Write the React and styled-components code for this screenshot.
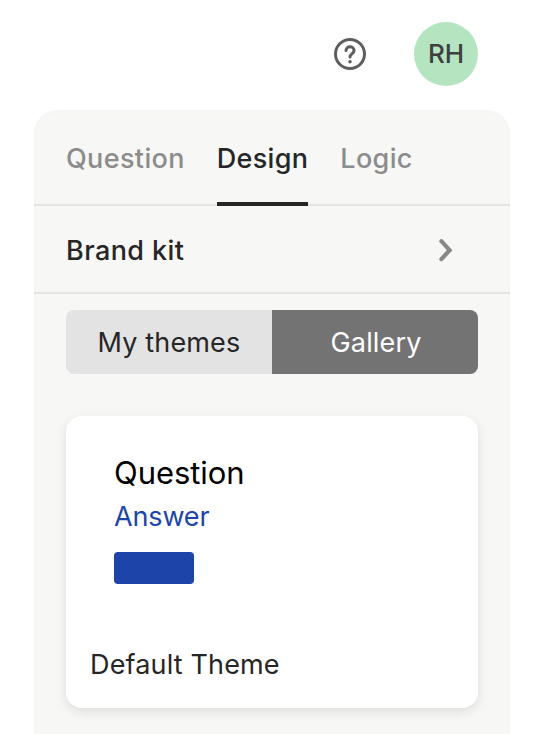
import React from 'react';
import styled, { createGlobalStyle } from 'styled-components';

const GlobalStyle = createGlobalStyle`
  * { box-sizing: border-box; }
  body { margin: 0; background: #fff; overflow: hidden; }
  button { font: inherit; border: 0; padding: 0; background: none; letter-spacing: inherit; }
`;

const Page = styled.div`
  height: 734px;
  display: flex;
  flex-direction: column;
  padding: 0 32px 0 34px;
  overflow: hidden;
  font-family: Inter, sans-serif;
  color: #262627;
`;

const TopBar = styled.header`
  height: 110px;
  flex: none;
  display: flex;
  justify-content: flex-end;
  align-items: center;
  gap: 48px;
  padding: 0 32px 2px 0;
`;

const HelpIcon = styled.svg`
  width: 32px;
  height: 32px;
`;

const Avatar = styled.div`
  width: 64px;
  height: 64px;
  padding-bottom: 1px;
  border-radius: 50%;
  background: #b5e5c0;
  color: #3e3f3f;
  display: grid;
  place-items: center;
  font-size: 26px;
  font-weight: 500;
`;

const Panel = styled.aside`
  flex: 1;
  background: #f7f7f5;
  border: 2px solid #f5f5f4;
  border-width: 2px 2px 0;
  border-radius: 24px 24px 0 0;
`;

const Tabs = styled.nav`
  height: 94px;
  display: flex;
  gap: 32px;
  margin: 0 -2px;
  padding-left: 32px;
  border-bottom: 2px solid #e4e4e3;
`;

const Tab = styled.button`
  height: 94px;
  padding-top: 2px;
  font-size: 27px;
  font-weight: 500;
  letter-spacing: ${(p) => (p.$active ? '0.3px' : '0.36px')};
  color: ${(p) => (p.$active ? '#262627' : '#8c8c8c')};
  border-bottom: 4px solid ${(p) => (p.$active ? '#262627' : 'transparent')};
`;

const BrandRow = styled.div`
  height: 88px;
  display: flex;
  align-items: center;
  justify-content: space-between;
  margin: 0 -2px;
  padding: 2px 56px 0 32px;
  border-bottom: 2px solid #e4e4e3;
  font-size: 27px;
  font-weight: 500;
  letter-spacing: 0.42px;
`;

const Chevron = styled.svg`
  width: 16px;
  height: 24px;
`;

const Segmented = styled.div`
  display: grid;
  grid-template-columns: 1fr 1fr;
  height: 64px;
  margin: 16px 30px 42px;
  border-radius: 8px;
  overflow: hidden;
`;

const Segment = styled.button`
  font-size: 27px;
  letter-spacing: 0.15px;
  padding-left: ${(p) => (p.$active ? 2 : 0)}px;
  background: ${(p) => (p.$active ? '#737373' : '#e3e3e3')};
  color: ${(p) => (p.$active ? '#fff' : '#262627')};
`;

const ThemeCard = styled.article`
  height: 292px;
  margin: 0 30px;
  padding: 36px 24px 0;
  background: #fff;
  border-radius: 16px;
  box-shadow: 0 4px 12px rgba(0, 0, 0, 0.1);
`;

const Preview = styled.div`
  height: 193px;
  padding-left: 24px;
`;

const PreviewQuestion = styled.div`
  font-size: 31px;
  line-height: 42px;
  letter-spacing: -0.05px;
  color: #000;
`;

const PreviewAnswer = styled.div`
  font-size: 27px;
  line-height: 45px;
  letter-spacing: -0.15px;
  color: #1d44a9;
`;

const PreviewButton = styled.div`
  width: 80px;
  height: 32px;
  margin-top: 13px;
  border-radius: 4px;
  background: #1d44a9;
`;

const ThemeName = styled.div`
  font-size: 27px;
  line-height: 40px;
  letter-spacing: 0.15px;
`;

export default function App() {
  return (
    <Page>
      <GlobalStyle />
      <TopBar>
        <HelpIcon viewBox="0 0 32 32" fill="none" stroke="#5e5e5e" strokeWidth="3">
          <circle cx="16" cy="16" r="14.5" />
          <path d="M12 12.4c0-2.2 1.8-3.6 4-3.6s4.1 1.5 4.1 3.7c0 3-4.1 3.2-4.1 6.5" strokeWidth="3" strokeLinecap="round" />
          <circle cx="16" cy="23.8" r="1.8" fill="#5e5e5e" stroke="none" />
        </HelpIcon>
        <Avatar>RH</Avatar>
      </TopBar>
      <Panel>
        <Tabs>
          <Tab>Question</Tab>
          <Tab $active>Design</Tab>
          <Tab>Logic</Tab>
        </Tabs>
        <BrandRow>
          Brand kit
          <Chevron viewBox="0 0 16 24" fill="none" stroke="#888888" strokeWidth="4.2">
            <path d="M3.4 3.2L11.6 12.2 3.4 21.2" strokeLinecap="round" />
          </Chevron>
        </BrandRow>
        <Segmented>
          <Segment>My themes</Segment>
          <Segment $active>Gallery</Segment>
        </Segmented>
        <ThemeCard>
          <Preview>
            <PreviewQuestion>Question</PreviewQuestion>
            <PreviewAnswer>Answer</PreviewAnswer>
            <PreviewButton />
          </Preview>
          <ThemeName>Default Theme</ThemeName>
        </ThemeCard>
      </Panel>
    </Page>
  );
}
